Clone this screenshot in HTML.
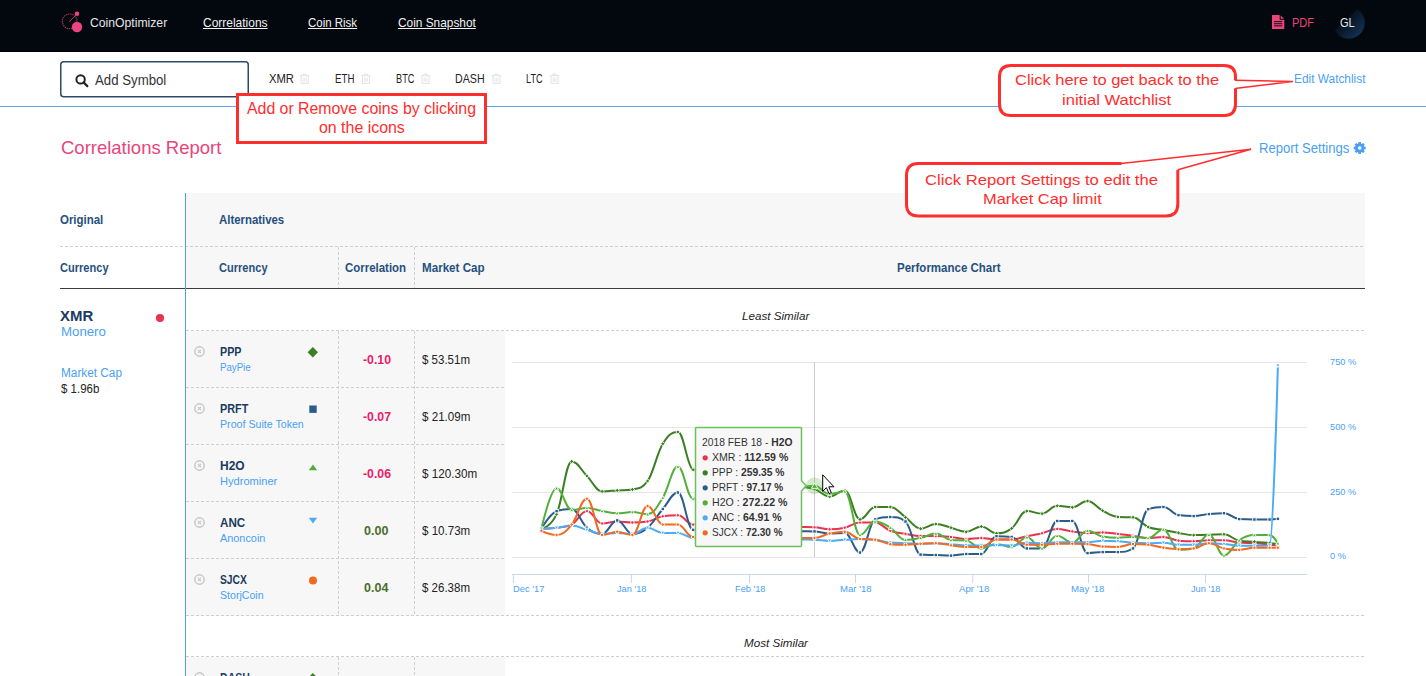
<!DOCTYPE html>
<html><head><meta charset="utf-8"><title>CoinOptimizer - Correlations</title>
<style>
html,body{margin:0;padding:0;}
body{width:1426px;height:676px;overflow:hidden;position:relative;background:#fff;font-family:"Liberation Sans",sans-serif;}
.t{position:absolute;white-space:nowrap;line-height:1;}
.a{position:absolute;}
svg{position:absolute;left:0;top:0;overflow:visible;}
</style></head><body>
<svg width="1426" height="676" viewBox="0 0 1426 676"><rect x="0" y="0" width="1426" height="52" fill="#03080f"/><rect x="0" y="51" width="1426" height="1" fill="#000"/><circle cx="69.7" cy="21.4" r="7.4" fill="none" stroke="#b8335f" stroke-width="1.1" stroke-dasharray="1.4 0.8"/><line x1="69.3" y1="21.6" x2="76" y2="15.2" stroke="#b8335f" stroke-width="1"/><circle cx="77" cy="27" r="5.2" fill="#ec4480"/><circle cx="77" cy="13.8" r="2.3" fill="#ec4480"/><path d="M1272 15H1279.5L1284.3 19.8V29H1272Z" fill="#e8457a"/><path d="M1280 15V19.5H1284.3" fill="#03080f" stroke="#03080f" stroke-width="0.6"/><path d="M1280.6 15.4L1284 18.8H1280.6Z" fill="#e8457a"/><rect x="1274" y="21.2" width="8.3" height="0.9" fill="#03080f"/><rect x="1274" y="23.3" width="8.3" height="0.9" fill="#03080f"/><rect x="1274" y="25.4" width="8.3" height="0.9" fill="#03080f"/><defs><linearGradient id="avg" x1="1346" y1="19.9" x2="1360" y2="34" gradientUnits="userSpaceOnUse"><stop offset="0" stop-color="#07111f"/><stop offset="1" stop-color="#123152"/></linearGradient></defs><path d="M1357.2 9.2A16 16 0 1 1 1334.8 30.6Z" fill="url(#avg)"/><rect x="60.75" y="61.75" width="187.5" height="35" rx="3" fill="#fff" stroke="#2d4a66" stroke-width="1.5"/><circle cx="80.6" cy="79.4" r="4.2" fill="none" stroke="#222" stroke-width="2"/><line x1="83.6" y1="82.4" x2="87.3" y2="86.1" stroke="#222" stroke-width="2.2" stroke-linecap="round"/><rect x="0" y="106" width="1426" height="1" fill="#5aa9e6"/><g fill="none" stroke="#e2e2e2" stroke-width="1"><path d="M300.0 75.7H309.4"/><path d="M303.0 75.5V74H306.2V75.5"/><path d="M301.2 76V83.4H308.2V76"/><path d="M303.2 77.5V82M304.7 77.5V82M306.2 77.5V82" stroke="#e8e8e8"/></g><g fill="none" stroke="#e2e2e2" stroke-width="1"><path d="M361.2 75.7H370.6"/><path d="M364.2 75.5V74H367.4V75.5"/><path d="M362.4 76V83.4H369.4V76"/><path d="M364.4 77.5V82M365.9 77.5V82M367.4 77.5V82" stroke="#e8e8e8"/></g><g fill="none" stroke="#e2e2e2" stroke-width="1"><path d="M420.9 75.7H430.3"/><path d="M423.9 75.5V74H427.1V75.5"/><path d="M422.1 76V83.4H429.1V76"/><path d="M424.1 77.5V82M425.6 77.5V82M427.1 77.5V82" stroke="#e8e8e8"/></g><g fill="none" stroke="#e2e2e2" stroke-width="1"><path d="M491.8 75.7H501.2"/><path d="M494.8 75.5V74H498.0V75.5"/><path d="M493.0 76V83.4H500.0V76"/><path d="M495.0 77.5V82M496.5 77.5V82M498.0 77.5V82" stroke="#e8e8e8"/></g><g fill="none" stroke="#e2e2e2" stroke-width="1"><path d="M549.9 75.7H559.3"/><path d="M552.9 75.5V74H556.1V75.5"/><path d="M551.1 76V83.4H558.1V76"/><path d="M553.1 77.5V82M554.6 77.5V82M556.1 77.5V82" stroke="#e8e8e8"/></g><rect x="186" y="193" width="1179" height="96" fill="#f7f7f7"/><rect x="186" y="331" width="319" height="285" fill="#f7f7f7"/><rect x="186" y="657" width="319" height="30" fill="#f7f7f7"/><line x1="60" y1="246.5" x2="1365" y2="246.5" stroke="#cfcfcf" stroke-width="1" stroke-dasharray="3 2"/><rect x="60" y="288" width="1305" height="1" fill="#3c3c3c"/><line x1="186" y1="330.5" x2="1365" y2="330.5" stroke="#cfcfcf" stroke-width="1" stroke-dasharray="3 2"/><line x1="186" y1="387.5" x2="505" y2="387.5" stroke="#cfcfcf" stroke-width="1" stroke-dasharray="3 2"/><line x1="186" y1="444.5" x2="505" y2="444.5" stroke="#cfcfcf" stroke-width="1" stroke-dasharray="3 2"/><line x1="186" y1="501.5" x2="505" y2="501.5" stroke="#cfcfcf" stroke-width="1" stroke-dasharray="3 2"/><line x1="186" y1="558.5" x2="505" y2="558.5" stroke="#cfcfcf" stroke-width="1" stroke-dasharray="3 2"/><line x1="186" y1="615.5" x2="1365" y2="615.5" stroke="#cfcfcf" stroke-width="1" stroke-dasharray="3 2"/><line x1="186" y1="656.5" x2="1365" y2="656.5" stroke="#cfcfcf" stroke-width="1" stroke-dasharray="3 2"/><line x1="338.5" y1="247" x2="338.5" y2="288" stroke="#cfcfcf" stroke-width="1" stroke-dasharray="3 2"/><line x1="338.5" y1="331" x2="338.5" y2="615" stroke="#cfcfcf" stroke-width="1" stroke-dasharray="3 2"/><line x1="338.5" y1="657" x2="338.5" y2="680" stroke="#cfcfcf" stroke-width="1" stroke-dasharray="3 2"/><line x1="414.5" y1="247" x2="414.5" y2="288" stroke="#cfcfcf" stroke-width="1" stroke-dasharray="3 2"/><line x1="414.5" y1="331" x2="414.5" y2="615" stroke="#cfcfcf" stroke-width="1" stroke-dasharray="3 2"/><line x1="414.5" y1="657" x2="414.5" y2="680" stroke="#cfcfcf" stroke-width="1" stroke-dasharray="3 2"/><rect x="185" y="193" width="1" height="490" fill="#4a9fe8"/><circle cx="199.5" cy="351.5" r="4.7" fill="none" stroke="#c8c6c6" stroke-width="1.4"/><path d="M198 349.9L201 353.1M201 349.9L198 353.1" stroke="#c8c6c6" stroke-width="1.1"/><path d="M312.8 347.1L318 352.3L312.8 357.5L307.6 352.3Z" fill="#3b7f22"/><circle cx="199.5" cy="408.5" r="4.7" fill="none" stroke="#c8c6c6" stroke-width="1.4"/><path d="M198 406.9L201 410.1M201 406.9L198 410.1" stroke="#c8c6c6" stroke-width="1.1"/><rect x="309.3" y="405.5" width="7.4" height="7.4" fill="#2b5d8a"/><circle cx="199.5" cy="465.5" r="4.7" fill="none" stroke="#c8c6c6" stroke-width="1.4"/><path d="M198 463.9L201 467.1M201 463.9L198 467.1" stroke="#c8c6c6" stroke-width="1.1"/><path d="M313 464.4L317.2 470.20000000000005L308.8 470.20000000000005Z" fill="#52b03a"/><circle cx="199.5" cy="522.5" r="4.7" fill="none" stroke="#c8c6c6" stroke-width="1.4"/><path d="M198 520.9L201 524.1M201 520.9L198 524.1" stroke="#c8c6c6" stroke-width="1.1"/><path d="M308.8 517.8L317.2 517.8L313 523.4Z" fill="#4bacf5"/><circle cx="199.5" cy="579.5" r="4.7" fill="none" stroke="#c8c6c6" stroke-width="1.4"/><path d="M198 577.9L201 581.1M201 577.9L198 581.1" stroke="#c8c6c6" stroke-width="1.1"/><circle cx="313" cy="580.5" r="4" fill="#f06a22"/><circle cx="199.5" cy="677.5" r="4.7" fill="none" stroke="#c8c6c6" stroke-width="1.4"/><path d="M198 675.9L201 679.1M201 675.9L198 679.1" stroke="#c8c6c6" stroke-width="1.1"/><path d="M312.8 673.0999999999999L318 678.3L312.8 683.5L307.6 678.3Z" fill="#3b7f22"/><rect x="505" y="331" width="860" height="284" fill="#fff"/><rect x="512" y="362" width="795" height="1" fill="#e6e6e6"/><rect x="512" y="427" width="795" height="1" fill="#e6e6e6"/><rect x="512" y="492" width="795" height="1" fill="#e6e6e6"/><rect x="512" y="557" width="795" height="1" fill="#e6e6e6"/><rect x="512" y="574" width="795" height="1" fill="#ccd6eb"/><rect x="512.9" y="575" width="1" height="8" fill="#ccd6eb"/><rect x="630.9" y="575" width="1" height="8" fill="#ccd6eb"/><rect x="749.0" y="575" width="1" height="8" fill="#ccd6eb"/><rect x="855.0" y="575" width="1" height="8" fill="#ccd6eb"/><rect x="972.2" y="575" width="1" height="8" fill="#ccd6eb"/><rect x="1088.0" y="575" width="1" height="8" fill="#ccd6eb"/><rect x="1205.0" y="575" width="1" height="8" fill="#ccd6eb"/><rect x="814" y="362" width="1" height="195" fill="#cccccc"/><g><path d="M541.4 528.7C541.4 528.7 550.5 528.5 556.6 527.7C562.6 526.9 565.7 527.7 571.7 524.6C577.8 521.5 580.8 511.0 586.9 511.0C593.0 511.0 596.0 523.5 602.1 523.5C608.1 523.5 611.2 521.5 617.2 521.5C623.3 521.5 626.4 522.5 632.4 522.5C638.5 522.5 641.5 522.5 647.6 521.5C653.7 520.5 656.7 517.3 662.8 516.3C668.8 515.3 671.9 515.3 677.9 515.3C684.0 515.3 687.0 524.3 693.1 524.6C699.2 524.9 702.2 524.8 708.3 524.9C714.3 525.1 717.4 525.1 723.4 525.3C729.5 525.4 732.5 525.5 738.6 525.6C744.7 525.7 747.7 525.8 753.8 526.0C759.8 526.1 762.9 526.2 769.0 526.3C775.0 526.4 778.1 526.5 784.1 526.6C790.2 526.8 793.2 526.8 799.3 527.0C805.4 527.1 808.4 527.0 814.5 527.3C820.5 527.6 823.6 529.3 829.6 529.3C835.7 529.3 838.7 529.1 844.8 527.7C850.9 526.3 853.9 522.5 860.0 522.5C866.0 522.5 869.1 522.5 875.1 522.5C881.2 522.5 884.2 528.5 890.3 530.8C896.4 533.1 899.4 532.9 905.5 533.9C911.5 534.9 914.6 536.0 920.6 536.0C926.7 536.0 929.8 536.0 935.8 536.0C941.9 536.0 944.9 536.4 951.0 537.0C957.1 537.6 960.1 539.0 966.2 539.0C972.2 539.0 975.3 538.0 981.3 538.0C987.4 538.0 990.4 539.5 996.5 539.5C1002.6 539.5 1005.6 539.5 1011.7 539.5C1017.7 539.5 1020.8 537.5 1026.8 536.3C1032.9 535.1 1035.9 534.8 1042.0 533.3C1048.1 531.8 1051.1 528.9 1057.2 528.9C1063.2 528.9 1066.3 530.6 1072.3 531.4C1078.4 532.2 1081.5 532.9 1087.5 532.9C1093.6 532.9 1096.6 532.4 1102.7 532.4C1108.8 532.4 1111.8 533.2 1117.9 533.9C1123.9 534.6 1127.0 535.0 1133.0 535.8C1139.1 536.6 1142.1 538.0 1148.2 538.0C1154.3 538.0 1157.3 536.9 1163.4 536.9C1169.4 536.9 1172.5 540.1 1178.5 540.7C1184.6 541.3 1187.6 541.3 1193.7 541.3C1199.8 541.3 1202.8 540.3 1208.9 540.3C1214.9 540.3 1218.0 540.3 1224.0 540.3C1230.1 540.3 1233.2 541.9 1239.2 542.5C1245.3 543.1 1248.3 542.8 1254.4 543.2C1260.5 543.6 1263.5 544.1 1269.6 544.7C1272.9 545.0 1277.9 545.4 1277.9 545.4" fill="none" stroke="#e8334f" stroke-width="2" stroke-linejoin="round" stroke-linecap="round"/><circle cx="541.4" cy="528.7" r="1.7" fill="#e8334f" stroke="#fff" stroke-width="0.9"/><circle cx="556.6" cy="527.7" r="1.7" fill="#e8334f" stroke="#fff" stroke-width="0.9"/><circle cx="571.7" cy="524.6" r="1.7" fill="#e8334f" stroke="#fff" stroke-width="0.9"/><circle cx="586.9" cy="511.0" r="1.7" fill="#e8334f" stroke="#fff" stroke-width="0.9"/><circle cx="602.1" cy="523.5" r="1.7" fill="#e8334f" stroke="#fff" stroke-width="0.9"/><circle cx="617.2" cy="521.5" r="1.7" fill="#e8334f" stroke="#fff" stroke-width="0.9"/><circle cx="632.4" cy="522.5" r="1.7" fill="#e8334f" stroke="#fff" stroke-width="0.9"/><circle cx="647.6" cy="521.5" r="1.7" fill="#e8334f" stroke="#fff" stroke-width="0.9"/><circle cx="662.8" cy="516.3" r="1.7" fill="#e8334f" stroke="#fff" stroke-width="0.9"/><circle cx="677.9" cy="515.3" r="1.7" fill="#e8334f" stroke="#fff" stroke-width="0.9"/><circle cx="693.1" cy="524.6" r="1.7" fill="#e8334f" stroke="#fff" stroke-width="0.9"/><circle cx="814.5" cy="527.3" r="1.7" fill="#e8334f" stroke="#fff" stroke-width="0.9"/><circle cx="829.6" cy="529.3" r="1.7" fill="#e8334f" stroke="#fff" stroke-width="0.9"/><circle cx="844.8" cy="527.7" r="1.7" fill="#e8334f" stroke="#fff" stroke-width="0.9"/><circle cx="860.0" cy="522.5" r="1.7" fill="#e8334f" stroke="#fff" stroke-width="0.9"/><circle cx="875.1" cy="522.5" r="1.7" fill="#e8334f" stroke="#fff" stroke-width="0.9"/><circle cx="890.3" cy="530.8" r="1.7" fill="#e8334f" stroke="#fff" stroke-width="0.9"/><circle cx="905.5" cy="533.9" r="1.7" fill="#e8334f" stroke="#fff" stroke-width="0.9"/><circle cx="920.6" cy="536.0" r="1.7" fill="#e8334f" stroke="#fff" stroke-width="0.9"/><circle cx="935.8" cy="536.0" r="1.7" fill="#e8334f" stroke="#fff" stroke-width="0.9"/><circle cx="951.0" cy="537.0" r="1.7" fill="#e8334f" stroke="#fff" stroke-width="0.9"/><circle cx="966.2" cy="539.0" r="1.7" fill="#e8334f" stroke="#fff" stroke-width="0.9"/><circle cx="981.3" cy="538.0" r="1.7" fill="#e8334f" stroke="#fff" stroke-width="0.9"/><circle cx="996.5" cy="539.5" r="1.7" fill="#e8334f" stroke="#fff" stroke-width="0.9"/><circle cx="1011.7" cy="539.5" r="1.7" fill="#e8334f" stroke="#fff" stroke-width="0.9"/><circle cx="1026.8" cy="536.3" r="1.7" fill="#e8334f" stroke="#fff" stroke-width="0.9"/><circle cx="1042.0" cy="533.3" r="1.7" fill="#e8334f" stroke="#fff" stroke-width="0.9"/><circle cx="1057.2" cy="528.9" r="1.7" fill="#e8334f" stroke="#fff" stroke-width="0.9"/><circle cx="1072.3" cy="531.4" r="1.7" fill="#e8334f" stroke="#fff" stroke-width="0.9"/><circle cx="1087.5" cy="532.9" r="1.7" fill="#e8334f" stroke="#fff" stroke-width="0.9"/><circle cx="1102.7" cy="532.4" r="1.7" fill="#e8334f" stroke="#fff" stroke-width="0.9"/><circle cx="1117.9" cy="533.9" r="1.7" fill="#e8334f" stroke="#fff" stroke-width="0.9"/><circle cx="1133.0" cy="535.8" r="1.7" fill="#e8334f" stroke="#fff" stroke-width="0.9"/><circle cx="1148.2" cy="538.0" r="1.7" fill="#e8334f" stroke="#fff" stroke-width="0.9"/><circle cx="1163.4" cy="536.9" r="1.7" fill="#e8334f" stroke="#fff" stroke-width="0.9"/><circle cx="1178.5" cy="540.7" r="1.7" fill="#e8334f" stroke="#fff" stroke-width="0.9"/><circle cx="1193.7" cy="541.3" r="1.7" fill="#e8334f" stroke="#fff" stroke-width="0.9"/><circle cx="1208.9" cy="540.3" r="1.7" fill="#e8334f" stroke="#fff" stroke-width="0.9"/><circle cx="1224.0" cy="540.3" r="1.7" fill="#e8334f" stroke="#fff" stroke-width="0.9"/><circle cx="1239.2" cy="542.5" r="1.7" fill="#e8334f" stroke="#fff" stroke-width="0.9"/><circle cx="1254.4" cy="543.2" r="1.7" fill="#e8334f" stroke="#fff" stroke-width="0.9"/><circle cx="1269.6" cy="544.7" r="1.7" fill="#e8334f" stroke="#fff" stroke-width="0.9"/><circle cx="1277.9" cy="545.4" r="1.7" fill="#e8334f" stroke="#fff" stroke-width="0.9"/><path d="M541.4 528.7C541.4 528.7 550.5 527.7 556.6 514.2C562.6 500.7 565.7 461.4 571.7 461.4C577.8 461.4 580.8 469.9 586.9 475.9C593.0 481.9 596.0 491.4 602.1 491.4C608.1 491.4 611.2 490.8 617.2 490.4C623.3 490.0 626.4 490.4 632.4 489.4C638.5 488.4 641.5 489.4 647.6 481.0C653.7 472.6 656.7 453.6 662.8 443.8C668.8 434.0 671.9 432.0 677.9 432.0C684.0 432.0 687.0 467.3 693.1 469.7C699.2 472.1 702.2 471.1 708.3 472.1C714.3 473.1 717.4 473.6 723.4 474.5C729.5 475.5 732.5 476.0 738.6 476.9C744.7 477.9 747.7 478.4 753.8 479.4C759.8 480.3 762.9 480.8 769.0 481.8C775.0 482.7 778.1 483.2 784.1 484.2C790.2 485.1 793.2 485.6 799.3 486.6C805.4 487.6 808.4 487.0 814.5 489.0C820.5 491.0 823.6 496.6 829.6 496.6C835.7 496.6 838.7 490.4 844.8 490.4C850.9 490.4 853.9 519.4 860.0 519.4C866.0 519.4 869.1 507.0 875.1 507.0C881.2 507.0 884.2 507.0 890.3 507.0C896.4 507.0 899.4 513.0 905.5 517.3C911.5 521.6 914.6 528.7 920.6 528.7C926.7 528.7 929.8 524.0 935.8 524.0C941.9 524.0 944.9 526.1 951.0 527.7C957.1 529.3 960.1 531.8 966.2 531.8C972.2 531.8 975.3 526.5 981.3 526.5C987.4 526.5 990.4 533.3 996.5 533.3C1002.6 533.3 1005.6 532.8 1011.7 528.4C1017.7 524.0 1020.8 511.1 1026.8 511.1C1032.9 511.1 1035.9 513.6 1042.0 513.6C1048.1 513.6 1051.1 505.8 1057.2 505.8C1063.2 505.8 1066.3 507.3 1072.3 507.3C1078.4 507.3 1081.5 501.0 1087.5 501.0C1093.6 501.0 1096.6 507.5 1102.7 510.7C1108.8 513.9 1111.8 516.7 1117.9 517.0C1123.9 517.3 1127.0 517.0 1133.0 517.3C1139.1 517.6 1142.1 524.5 1148.2 527.0C1154.3 529.5 1157.3 528.7 1163.4 529.9C1169.4 531.1 1172.5 531.9 1178.5 532.9C1184.6 533.9 1187.6 535.1 1193.7 535.1C1199.8 535.1 1202.8 535.0 1208.9 534.8C1214.9 534.6 1218.0 534.3 1224.0 534.3C1230.1 534.3 1233.2 539.7 1239.2 540.7C1245.3 541.7 1248.3 541.2 1254.4 541.7C1260.5 542.2 1263.5 542.6 1269.6 543.2C1272.9 543.5 1277.9 544.0 1277.9 544.0" fill="none" stroke="#3b7f22" stroke-width="2" stroke-linejoin="round" stroke-linecap="round"/><path d="M541.4 526.6L543.5 528.7L541.4 530.8L539.3 528.7Z" fill="#3b7f22" stroke="#fff" stroke-width="0.9"/><path d="M556.6 512.1L558.7 514.2L556.6 516.3L554.4 514.2Z" fill="#3b7f22" stroke="#fff" stroke-width="0.9"/><path d="M571.7 459.3L573.9 461.4L571.7 463.5L569.6 461.4Z" fill="#3b7f22" stroke="#fff" stroke-width="0.9"/><path d="M586.9 473.8L589.0 475.9L586.9 478.0L584.8 475.9Z" fill="#3b7f22" stroke="#fff" stroke-width="0.9"/><path d="M602.1 489.3L604.2 491.4L602.1 493.5L600.0 491.4Z" fill="#3b7f22" stroke="#fff" stroke-width="0.9"/><path d="M617.2 488.3L619.4 490.4L617.2 492.5L615.1 490.4Z" fill="#3b7f22" stroke="#fff" stroke-width="0.9"/><path d="M632.4 487.3L634.5 489.4L632.4 491.5L630.3 489.4Z" fill="#3b7f22" stroke="#fff" stroke-width="0.9"/><path d="M647.6 478.9L649.7 481.0L647.6 483.1L645.5 481.0Z" fill="#3b7f22" stroke="#fff" stroke-width="0.9"/><path d="M662.8 441.7L664.9 443.8L662.8 445.9L660.6 443.8Z" fill="#3b7f22" stroke="#fff" stroke-width="0.9"/><path d="M677.9 429.9L680.1 432.0L677.9 434.1L675.8 432.0Z" fill="#3b7f22" stroke="#fff" stroke-width="0.9"/><path d="M693.1 467.6L695.2 469.7L693.1 471.8L691.0 469.7Z" fill="#3b7f22" stroke="#fff" stroke-width="0.9"/><path d="M814.5 486.9L816.6 489.0L814.5 491.1L812.3 489.0Z" fill="#3b7f22" stroke="#fff" stroke-width="0.9"/><path d="M829.6 494.5L831.8 496.6L829.6 498.7L827.5 496.6Z" fill="#3b7f22" stroke="#fff" stroke-width="0.9"/><path d="M844.8 488.3L846.9 490.4L844.8 492.5L842.7 490.4Z" fill="#3b7f22" stroke="#fff" stroke-width="0.9"/><path d="M860.0 517.3L862.1 519.4L860.0 521.5L857.8 519.4Z" fill="#3b7f22" stroke="#fff" stroke-width="0.9"/><path d="M875.1 504.9L877.3 507.0L875.1 509.1L873.0 507.0Z" fill="#3b7f22" stroke="#fff" stroke-width="0.9"/><path d="M890.3 504.9L892.4 507.0L890.3 509.1L888.2 507.0Z" fill="#3b7f22" stroke="#fff" stroke-width="0.9"/><path d="M905.5 515.2L907.6 517.3L905.5 519.4L903.4 517.3Z" fill="#3b7f22" stroke="#fff" stroke-width="0.9"/><path d="M920.6 526.6L922.8 528.7L920.6 530.8L918.5 528.7Z" fill="#3b7f22" stroke="#fff" stroke-width="0.9"/><path d="M935.8 521.9L937.9 524.0L935.8 526.1L933.7 524.0Z" fill="#3b7f22" stroke="#fff" stroke-width="0.9"/><path d="M951.0 525.6L953.1 527.7L951.0 529.8L948.9 527.7Z" fill="#3b7f22" stroke="#fff" stroke-width="0.9"/><path d="M966.2 529.7L968.3 531.8L966.2 533.9L964.0 531.8Z" fill="#3b7f22" stroke="#fff" stroke-width="0.9"/><path d="M981.3 524.4L983.5 526.5L981.3 528.6L979.2 526.5Z" fill="#3b7f22" stroke="#fff" stroke-width="0.9"/><path d="M996.5 531.2L998.6 533.3L996.5 535.4L994.4 533.3Z" fill="#3b7f22" stroke="#fff" stroke-width="0.9"/><path d="M1011.7 526.3L1013.8 528.4L1011.7 530.5L1009.5 528.4Z" fill="#3b7f22" stroke="#fff" stroke-width="0.9"/><path d="M1026.8 509.0L1029.0 511.1L1026.8 513.2L1024.7 511.1Z" fill="#3b7f22" stroke="#fff" stroke-width="0.9"/><path d="M1042.0 511.5L1044.1 513.6L1042.0 515.7L1039.9 513.6Z" fill="#3b7f22" stroke="#fff" stroke-width="0.9"/><path d="M1057.2 503.7L1059.3 505.8L1057.2 507.9L1055.1 505.8Z" fill="#3b7f22" stroke="#fff" stroke-width="0.9"/><path d="M1072.3 505.2L1074.5 507.3L1072.3 509.4L1070.2 507.3Z" fill="#3b7f22" stroke="#fff" stroke-width="0.9"/><path d="M1087.5 498.9L1089.6 501.0L1087.5 503.1L1085.4 501.0Z" fill="#3b7f22" stroke="#fff" stroke-width="0.9"/><path d="M1102.7 508.6L1104.8 510.7L1102.7 512.8L1100.6 510.7Z" fill="#3b7f22" stroke="#fff" stroke-width="0.9"/><path d="M1117.9 514.9L1120.0 517.0L1117.9 519.1L1115.7 517.0Z" fill="#3b7f22" stroke="#fff" stroke-width="0.9"/><path d="M1133.0 515.2L1135.2 517.3L1133.0 519.4L1130.9 517.3Z" fill="#3b7f22" stroke="#fff" stroke-width="0.9"/><path d="M1148.2 524.9L1150.3 527.0L1148.2 529.1L1146.1 527.0Z" fill="#3b7f22" stroke="#fff" stroke-width="0.9"/><path d="M1163.4 527.8L1165.5 529.9L1163.4 532.0L1161.2 529.9Z" fill="#3b7f22" stroke="#fff" stroke-width="0.9"/><path d="M1178.5 530.8L1180.7 532.9L1178.5 535.0L1176.4 532.9Z" fill="#3b7f22" stroke="#fff" stroke-width="0.9"/><path d="M1193.7 533.0L1195.8 535.1L1193.7 537.2L1191.6 535.1Z" fill="#3b7f22" stroke="#fff" stroke-width="0.9"/><path d="M1208.9 532.7L1211.0 534.8L1208.9 536.9L1206.8 534.8Z" fill="#3b7f22" stroke="#fff" stroke-width="0.9"/><path d="M1224.0 532.2L1226.2 534.3L1224.0 536.4L1221.9 534.3Z" fill="#3b7f22" stroke="#fff" stroke-width="0.9"/><path d="M1239.2 538.6L1241.3 540.7L1239.2 542.8L1237.1 540.7Z" fill="#3b7f22" stroke="#fff" stroke-width="0.9"/><path d="M1254.4 539.6L1256.5 541.7L1254.4 543.8L1252.3 541.7Z" fill="#3b7f22" stroke="#fff" stroke-width="0.9"/><path d="M1269.6 541.1L1271.7 543.2L1269.6 545.3L1267.4 543.2Z" fill="#3b7f22" stroke="#fff" stroke-width="0.9"/><path d="M1277.9 541.9L1280.0 544.0L1277.9 546.1L1275.8 544.0Z" fill="#3b7f22" stroke="#fff" stroke-width="0.9"/><path d="M541.4 528.7C541.4 528.7 550.5 513.2 556.6 511.1C562.6 509.0 565.7 509.0 571.7 509.0C577.8 509.0 580.8 522.7 586.9 527.7C593.0 532.7 596.0 533.9 602.1 533.9C608.1 533.9 611.2 520.4 617.2 520.4C623.3 520.4 626.4 533.9 632.4 533.9C638.5 533.9 641.5 532.7 647.6 527.7C653.7 522.7 656.7 516.0 662.8 509.0C668.8 502.0 671.9 492.5 677.9 492.5C684.0 492.5 687.0 529.6 693.1 529.8C699.2 530.0 702.2 529.9 708.3 530.0C714.3 530.1 717.4 530.1 723.4 530.2C729.5 530.3 732.5 530.3 738.6 530.4C744.7 530.5 747.7 530.5 753.8 530.6C759.8 530.7 762.9 530.7 769.0 530.8C775.0 530.9 778.1 530.9 784.1 531.0C790.2 531.1 793.2 531.1 799.3 531.2C805.4 531.3 808.4 531.2 814.5 531.4C820.5 531.6 823.6 533.5 829.6 533.5C835.7 533.5 838.7 532.9 844.8 532.9C850.9 532.9 853.9 552.5 860.0 552.5C866.0 552.5 869.1 521.8 875.1 519.4C881.2 517.0 884.2 517.0 890.3 517.0C896.4 517.0 899.4 517.0 905.5 521.5C911.5 526.0 914.6 554.2 920.6 554.6C926.7 555.0 929.8 554.8 935.8 555.0C941.9 555.2 944.9 555.6 951.0 555.6C957.1 555.6 960.1 554.0 966.2 554.0C972.2 554.0 975.3 554.0 981.3 554.0C987.4 554.0 990.4 536.3 996.5 536.3C1002.6 536.3 1005.6 536.3 1011.7 536.9C1017.7 537.5 1020.8 548.4 1026.8 548.4C1032.9 548.4 1035.9 548.4 1042.0 548.4C1048.1 548.4 1051.1 521.0 1057.2 521.0C1063.2 521.0 1066.3 521.0 1072.3 521.0C1078.4 521.0 1081.5 553.1 1087.5 553.1C1093.6 553.1 1096.6 552.1 1102.7 552.1C1108.8 552.1 1111.8 552.1 1117.9 552.1C1123.9 552.1 1127.0 552.1 1133.0 548.4C1139.1 544.7 1142.1 511.4 1148.2 509.2C1154.3 507.0 1157.3 507.0 1163.4 507.0C1169.4 507.0 1172.5 514.1 1178.5 515.1C1184.6 516.1 1187.6 516.1 1193.7 516.1C1199.8 516.1 1202.8 514.7 1208.9 514.1C1214.9 513.5 1218.0 513.2 1224.0 513.2C1230.1 513.2 1233.2 518.7 1239.2 519.1C1245.3 519.5 1248.3 519.5 1254.4 519.5C1260.5 519.5 1263.5 519.5 1269.6 519.5C1272.9 519.5 1277.9 518.8 1277.9 518.8" fill="none" stroke="#2b5d8a" stroke-width="2" stroke-linejoin="round" stroke-linecap="round"/><rect x="539.7" y="527.0" width="3.4" height="3.4" fill="#2b5d8a" stroke="#fff" stroke-width="0.9"/><rect x="554.9" y="509.4" width="3.4" height="3.4" fill="#2b5d8a" stroke="#fff" stroke-width="0.9"/><rect x="570.0" y="507.3" width="3.4" height="3.4" fill="#2b5d8a" stroke="#fff" stroke-width="0.9"/><rect x="585.2" y="526.0" width="3.4" height="3.4" fill="#2b5d8a" stroke="#fff" stroke-width="0.9"/><rect x="600.4" y="532.2" width="3.4" height="3.4" fill="#2b5d8a" stroke="#fff" stroke-width="0.9"/><rect x="615.5" y="518.7" width="3.4" height="3.4" fill="#2b5d8a" stroke="#fff" stroke-width="0.9"/><rect x="630.7" y="532.2" width="3.4" height="3.4" fill="#2b5d8a" stroke="#fff" stroke-width="0.9"/><rect x="645.9" y="526.0" width="3.4" height="3.4" fill="#2b5d8a" stroke="#fff" stroke-width="0.9"/><rect x="661.1" y="507.3" width="3.4" height="3.4" fill="#2b5d8a" stroke="#fff" stroke-width="0.9"/><rect x="676.2" y="490.8" width="3.4" height="3.4" fill="#2b5d8a" stroke="#fff" stroke-width="0.9"/><rect x="691.4" y="528.1" width="3.4" height="3.4" fill="#2b5d8a" stroke="#fff" stroke-width="0.9"/><rect x="812.8" y="529.7" width="3.4" height="3.4" fill="#2b5d8a" stroke="#fff" stroke-width="0.9"/><rect x="827.9" y="531.8" width="3.4" height="3.4" fill="#2b5d8a" stroke="#fff" stroke-width="0.9"/><rect x="843.1" y="531.2" width="3.4" height="3.4" fill="#2b5d8a" stroke="#fff" stroke-width="0.9"/><rect x="858.3" y="550.8" width="3.4" height="3.4" fill="#2b5d8a" stroke="#fff" stroke-width="0.9"/><rect x="873.4" y="517.7" width="3.4" height="3.4" fill="#2b5d8a" stroke="#fff" stroke-width="0.9"/><rect x="888.6" y="515.3" width="3.4" height="3.4" fill="#2b5d8a" stroke="#fff" stroke-width="0.9"/><rect x="903.8" y="519.8" width="3.4" height="3.4" fill="#2b5d8a" stroke="#fff" stroke-width="0.9"/><rect x="918.9" y="552.9" width="3.4" height="3.4" fill="#2b5d8a" stroke="#fff" stroke-width="0.9"/><rect x="934.1" y="553.3" width="3.4" height="3.4" fill="#2b5d8a" stroke="#fff" stroke-width="0.9"/><rect x="949.3" y="553.9" width="3.4" height="3.4" fill="#2b5d8a" stroke="#fff" stroke-width="0.9"/><rect x="964.5" y="552.3" width="3.4" height="3.4" fill="#2b5d8a" stroke="#fff" stroke-width="0.9"/><rect x="979.6" y="552.3" width="3.4" height="3.4" fill="#2b5d8a" stroke="#fff" stroke-width="0.9"/><rect x="994.8" y="534.6" width="3.4" height="3.4" fill="#2b5d8a" stroke="#fff" stroke-width="0.9"/><rect x="1010.0" y="535.2" width="3.4" height="3.4" fill="#2b5d8a" stroke="#fff" stroke-width="0.9"/><rect x="1025.1" y="546.7" width="3.4" height="3.4" fill="#2b5d8a" stroke="#fff" stroke-width="0.9"/><rect x="1040.3" y="546.7" width="3.4" height="3.4" fill="#2b5d8a" stroke="#fff" stroke-width="0.9"/><rect x="1055.5" y="519.3" width="3.4" height="3.4" fill="#2b5d8a" stroke="#fff" stroke-width="0.9"/><rect x="1070.6" y="519.3" width="3.4" height="3.4" fill="#2b5d8a" stroke="#fff" stroke-width="0.9"/><rect x="1085.8" y="551.4" width="3.4" height="3.4" fill="#2b5d8a" stroke="#fff" stroke-width="0.9"/><rect x="1101.0" y="550.4" width="3.4" height="3.4" fill="#2b5d8a" stroke="#fff" stroke-width="0.9"/><rect x="1116.2" y="550.4" width="3.4" height="3.4" fill="#2b5d8a" stroke="#fff" stroke-width="0.9"/><rect x="1131.3" y="546.7" width="3.4" height="3.4" fill="#2b5d8a" stroke="#fff" stroke-width="0.9"/><rect x="1146.5" y="507.5" width="3.4" height="3.4" fill="#2b5d8a" stroke="#fff" stroke-width="0.9"/><rect x="1161.7" y="505.3" width="3.4" height="3.4" fill="#2b5d8a" stroke="#fff" stroke-width="0.9"/><rect x="1176.8" y="513.4" width="3.4" height="3.4" fill="#2b5d8a" stroke="#fff" stroke-width="0.9"/><rect x="1192.0" y="514.4" width="3.4" height="3.4" fill="#2b5d8a" stroke="#fff" stroke-width="0.9"/><rect x="1207.2" y="512.4" width="3.4" height="3.4" fill="#2b5d8a" stroke="#fff" stroke-width="0.9"/><rect x="1222.3" y="511.5" width="3.4" height="3.4" fill="#2b5d8a" stroke="#fff" stroke-width="0.9"/><rect x="1237.5" y="517.4" width="3.4" height="3.4" fill="#2b5d8a" stroke="#fff" stroke-width="0.9"/><rect x="1252.7" y="517.8" width="3.4" height="3.4" fill="#2b5d8a" stroke="#fff" stroke-width="0.9"/><rect x="1267.9" y="517.8" width="3.4" height="3.4" fill="#2b5d8a" stroke="#fff" stroke-width="0.9"/><rect x="1276.2" y="517.1" width="3.4" height="3.4" fill="#2b5d8a" stroke="#fff" stroke-width="0.9"/><path d="M541.4 528.7C541.4 528.7 550.5 488.3 556.6 488.3C562.6 488.3 565.7 510.0 571.7 510.0C577.8 510.0 580.8 508.0 586.9 508.0C593.0 508.0 596.0 510.0 602.1 511.0C608.1 512.0 611.2 513.2 617.2 513.2C623.3 513.2 626.4 512.1 632.4 512.1C638.5 512.1 641.5 514.2 647.6 514.2C653.7 514.2 656.7 507.2 662.8 497.7C668.8 488.2 671.9 466.6 677.9 466.6C684.0 466.6 687.0 498.7 693.1 498.7C699.2 498.7 702.2 497.7 708.3 497.1C714.3 496.4 717.4 496.1 723.4 495.5C729.5 494.8 732.5 494.5 738.6 493.9C744.7 493.2 747.7 492.9 753.8 492.2C759.8 491.6 762.9 491.3 769.0 490.6C775.0 490.0 778.1 489.7 784.1 489.0C790.2 488.4 793.2 488.1 799.3 487.4C805.4 486.8 808.4 485.8 814.5 485.8C820.5 485.8 823.6 494.0 829.6 494.0C835.7 494.0 838.7 491.4 844.8 491.4C850.9 491.4 853.9 535.0 860.0 535.0C866.0 535.0 869.1 521.5 875.1 521.5C881.2 521.5 884.2 524.0 890.3 527.7C896.4 531.4 899.4 540.0 905.5 540.0C911.5 540.0 914.6 539.3 920.6 538.0C926.7 536.7 929.8 533.5 935.8 533.5C941.9 533.5 944.9 539.5 951.0 540.0C957.1 540.5 960.1 540.0 966.2 540.5C972.2 541.0 975.3 548.4 981.3 548.4C987.4 548.4 990.4 544.0 996.5 544.0C1002.6 544.0 1005.6 547.0 1011.7 547.0C1017.7 547.0 1020.8 537.3 1026.8 537.3C1032.9 537.3 1035.9 548.4 1042.0 548.4C1048.1 548.4 1051.1 535.8 1057.2 535.8C1063.2 535.8 1066.3 542.5 1072.3 542.5C1078.4 542.5 1081.5 530.7 1087.5 530.7C1093.6 530.7 1096.6 535.4 1102.7 536.6C1108.8 537.8 1111.8 537.8 1117.9 537.8C1123.9 537.8 1127.0 536.9 1133.0 536.9C1139.1 536.9 1142.1 538.0 1148.2 538.0C1154.3 538.0 1157.3 529.5 1163.4 529.5C1169.4 529.5 1172.5 549.9 1178.5 549.9C1184.6 549.9 1187.6 549.9 1193.7 548.4C1199.8 546.9 1202.8 534.8 1208.9 534.8C1214.9 534.8 1218.0 555.5 1224.0 555.5C1230.1 555.5 1233.2 544.4 1239.2 540.3C1245.3 536.2 1248.3 535.1 1254.4 535.1C1260.5 535.1 1263.5 535.1 1269.6 535.1C1272.9 535.1 1277.9 543.2 1277.9 543.2" fill="none" stroke="#52b03a" stroke-width="2" stroke-linejoin="round" stroke-linecap="round"/><path d="M541.4 526.7L543.4 530.4L539.4 530.4Z" fill="#52b03a" stroke="#fff" stroke-width="0.9"/><path d="M556.6 486.3L558.6 490.0L554.5 490.0Z" fill="#52b03a" stroke="#fff" stroke-width="0.9"/><path d="M571.7 508.0L573.8 511.7L569.7 511.7Z" fill="#52b03a" stroke="#fff" stroke-width="0.9"/><path d="M586.9 506.0L588.9 509.7L584.9 509.7Z" fill="#52b03a" stroke="#fff" stroke-width="0.9"/><path d="M602.1 509.0L604.1 512.7L600.0 512.7Z" fill="#52b03a" stroke="#fff" stroke-width="0.9"/><path d="M617.2 511.2L619.3 514.9L615.2 514.9Z" fill="#52b03a" stroke="#fff" stroke-width="0.9"/><path d="M632.4 510.1L634.5 513.8L630.4 513.8Z" fill="#52b03a" stroke="#fff" stroke-width="0.9"/><path d="M647.6 512.2L649.6 515.9L645.5 515.9Z" fill="#52b03a" stroke="#fff" stroke-width="0.9"/><path d="M662.8 495.7L664.8 499.4L660.7 499.4Z" fill="#52b03a" stroke="#fff" stroke-width="0.9"/><path d="M677.9 464.6L680.0 468.3L675.9 468.3Z" fill="#52b03a" stroke="#fff" stroke-width="0.9"/><path d="M693.1 496.7L695.1 500.4L691.1 500.4Z" fill="#52b03a" stroke="#fff" stroke-width="0.9"/><path d="M814.5 483.8L816.5 487.5L812.4 487.5Z" fill="#52b03a" stroke="#fff" stroke-width="0.9"/><path d="M829.6 492.0L831.7 495.7L827.6 495.7Z" fill="#52b03a" stroke="#fff" stroke-width="0.9"/><path d="M844.8 489.4L846.8 493.1L842.8 493.1Z" fill="#52b03a" stroke="#fff" stroke-width="0.9"/><path d="M860.0 533.0L862.0 536.7L857.9 536.7Z" fill="#52b03a" stroke="#fff" stroke-width="0.9"/><path d="M875.1 519.5L877.2 523.2L873.1 523.2Z" fill="#52b03a" stroke="#fff" stroke-width="0.9"/><path d="M890.3 525.7L892.3 529.4L888.3 529.4Z" fill="#52b03a" stroke="#fff" stroke-width="0.9"/><path d="M905.5 538.0L907.5 541.7L903.4 541.7Z" fill="#52b03a" stroke="#fff" stroke-width="0.9"/><path d="M920.6 536.0L922.7 539.7L918.6 539.7Z" fill="#52b03a" stroke="#fff" stroke-width="0.9"/><path d="M935.8 531.5L937.9 535.2L933.8 535.2Z" fill="#52b03a" stroke="#fff" stroke-width="0.9"/><path d="M951.0 538.0L953.0 541.7L949.0 541.7Z" fill="#52b03a" stroke="#fff" stroke-width="0.9"/><path d="M966.2 538.5L968.2 542.2L964.1 542.2Z" fill="#52b03a" stroke="#fff" stroke-width="0.9"/><path d="M981.3 546.4L983.4 550.1L979.3 550.1Z" fill="#52b03a" stroke="#fff" stroke-width="0.9"/><path d="M996.5 542.0L998.5 545.7L994.5 545.7Z" fill="#52b03a" stroke="#fff" stroke-width="0.9"/><path d="M1011.7 545.0L1013.7 548.7L1009.6 548.7Z" fill="#52b03a" stroke="#fff" stroke-width="0.9"/><path d="M1026.8 535.3L1028.9 539.0L1024.8 539.0Z" fill="#52b03a" stroke="#fff" stroke-width="0.9"/><path d="M1042.0 546.4L1044.0 550.1L1040.0 550.1Z" fill="#52b03a" stroke="#fff" stroke-width="0.9"/><path d="M1057.2 533.8L1059.2 537.5L1055.1 537.5Z" fill="#52b03a" stroke="#fff" stroke-width="0.9"/><path d="M1072.3 540.5L1074.4 544.2L1070.3 544.2Z" fill="#52b03a" stroke="#fff" stroke-width="0.9"/><path d="M1087.5 528.7L1089.6 532.4L1085.5 532.4Z" fill="#52b03a" stroke="#fff" stroke-width="0.9"/><path d="M1102.7 534.6L1104.7 538.3L1100.7 538.3Z" fill="#52b03a" stroke="#fff" stroke-width="0.9"/><path d="M1117.9 535.8L1119.9 539.5L1115.8 539.5Z" fill="#52b03a" stroke="#fff" stroke-width="0.9"/><path d="M1133.0 534.9L1135.1 538.6L1131.0 538.6Z" fill="#52b03a" stroke="#fff" stroke-width="0.9"/><path d="M1148.2 536.0L1150.2 539.7L1146.2 539.7Z" fill="#52b03a" stroke="#fff" stroke-width="0.9"/><path d="M1163.4 527.5L1165.4 531.2L1161.3 531.2Z" fill="#52b03a" stroke="#fff" stroke-width="0.9"/><path d="M1178.5 547.9L1180.6 551.6L1176.5 551.6Z" fill="#52b03a" stroke="#fff" stroke-width="0.9"/><path d="M1193.7 546.4L1195.8 550.1L1191.7 550.1Z" fill="#52b03a" stroke="#fff" stroke-width="0.9"/><path d="M1208.9 532.8L1210.9 536.5L1206.8 536.5Z" fill="#52b03a" stroke="#fff" stroke-width="0.9"/><path d="M1224.0 553.5L1226.1 557.2L1222.0 557.2Z" fill="#52b03a" stroke="#fff" stroke-width="0.9"/><path d="M1239.2 538.3L1241.3 542.0L1237.2 542.0Z" fill="#52b03a" stroke="#fff" stroke-width="0.9"/><path d="M1254.4 533.1L1256.4 536.8L1252.3 536.8Z" fill="#52b03a" stroke="#fff" stroke-width="0.9"/><path d="M1269.6 533.1L1271.6 536.8L1267.5 536.8Z" fill="#52b03a" stroke="#fff" stroke-width="0.9"/><path d="M1277.9 541.2L1279.9 544.9L1275.9 544.9Z" fill="#52b03a" stroke="#fff" stroke-width="0.9"/><path d="M541.4 528.7C541.4 528.7 550.5 528.3 556.6 527.7C562.6 527.1 565.7 525.6 571.7 525.6C577.8 525.6 580.8 528.1 586.9 529.8C593.0 531.5 596.0 533.9 602.1 533.9C608.1 533.9 611.2 532.9 617.2 532.9C623.3 532.9 626.4 533.9 632.4 533.9C638.5 533.9 641.5 527.7 647.6 527.7C653.7 527.7 656.7 532.9 662.8 532.9C668.8 532.9 671.9 532.9 677.9 532.9C684.0 532.9 687.0 537.8 693.1 538.0C699.2 538.2 702.2 538.1 708.3 538.2C714.3 538.3 717.4 538.3 723.4 538.4C729.5 538.5 732.5 538.6 738.6 538.6C744.7 538.7 747.7 538.8 753.8 538.9C759.8 538.9 762.9 539.0 769.0 539.1C775.0 539.1 778.1 539.2 784.1 539.3C790.2 539.4 793.2 539.4 799.3 539.5C805.4 539.6 808.4 539.5 814.5 539.7C820.5 539.9 823.6 540.7 829.6 540.7C835.7 540.7 838.7 540.0 844.8 539.7C850.9 539.4 853.9 539.0 860.0 539.0C866.0 539.0 869.1 539.0 875.1 539.7C881.2 540.4 884.2 542.0 890.3 542.6C896.4 543.2 899.4 543.0 905.5 543.2C911.5 543.4 914.6 543.8 920.6 543.8C926.7 543.8 929.8 543.2 935.8 543.2C941.9 543.2 944.9 543.8 951.0 544.2C957.1 544.6 960.1 545.1 966.2 545.3C972.2 545.5 975.3 545.5 981.3 545.5C987.4 545.5 990.4 545.2 996.5 545.2C1002.6 545.2 1005.6 545.5 1011.7 545.5C1017.7 545.5 1020.8 542.8 1026.8 542.8C1032.9 542.8 1035.9 543.2 1042.0 543.2C1048.1 543.2 1051.1 542.2 1057.2 542.2C1063.2 542.2 1066.3 542.2 1072.3 542.2C1078.4 542.2 1081.5 542.2 1087.5 542.2C1093.6 542.2 1096.6 540.7 1102.7 540.7C1108.8 540.7 1111.8 540.9 1117.9 541.3C1123.9 541.7 1127.0 542.4 1133.0 542.8C1139.1 543.2 1142.1 543.2 1148.2 543.2C1154.3 543.2 1157.3 542.8 1163.4 542.8C1169.4 542.8 1172.5 544.7 1178.5 544.7C1184.6 544.7 1187.6 544.7 1193.7 544.7C1199.8 544.7 1202.8 543.2 1208.9 543.2C1214.9 543.2 1218.0 543.5 1224.0 544.0C1230.1 544.5 1233.2 545.7 1239.2 545.7C1245.3 545.7 1248.3 545.7 1254.4 545.7C1260.5 545.7 1263.5 545.7 1269.6 545.5C1272.9 545.3 1277.9 365.6 1277.9 365.6" fill="none" stroke="#4bacf5" stroke-width="2" stroke-linejoin="round" stroke-linecap="round"/><path d="M539.4 527.0L543.4 527.0L541.4 530.7Z" fill="#4bacf5" stroke="#fff" stroke-width="0.9"/><path d="M554.5 526.0L558.6 526.0L556.6 529.7Z" fill="#4bacf5" stroke="#fff" stroke-width="0.9"/><path d="M569.7 523.9L573.8 523.9L571.7 527.6Z" fill="#4bacf5" stroke="#fff" stroke-width="0.9"/><path d="M584.9 528.1L588.9 528.1L586.9 531.8Z" fill="#4bacf5" stroke="#fff" stroke-width="0.9"/><path d="M600.0 532.2L604.1 532.2L602.1 535.9Z" fill="#4bacf5" stroke="#fff" stroke-width="0.9"/><path d="M615.2 531.2L619.3 531.2L617.2 534.9Z" fill="#4bacf5" stroke="#fff" stroke-width="0.9"/><path d="M630.4 532.2L634.5 532.2L632.4 535.9Z" fill="#4bacf5" stroke="#fff" stroke-width="0.9"/><path d="M645.5 526.0L649.6 526.0L647.6 529.7Z" fill="#4bacf5" stroke="#fff" stroke-width="0.9"/><path d="M660.7 531.2L664.8 531.2L662.8 534.9Z" fill="#4bacf5" stroke="#fff" stroke-width="0.9"/><path d="M675.9 531.2L680.0 531.2L677.9 534.9Z" fill="#4bacf5" stroke="#fff" stroke-width="0.9"/><path d="M691.1 536.3L695.1 536.3L693.1 540.0Z" fill="#4bacf5" stroke="#fff" stroke-width="0.9"/><path d="M812.4 538.0L816.5 538.0L814.5 541.7Z" fill="#4bacf5" stroke="#fff" stroke-width="0.9"/><path d="M827.6 539.0L831.7 539.0L829.6 542.7Z" fill="#4bacf5" stroke="#fff" stroke-width="0.9"/><path d="M842.8 538.0L846.8 538.0L844.8 541.7Z" fill="#4bacf5" stroke="#fff" stroke-width="0.9"/><path d="M857.9 537.3L862.0 537.3L860.0 541.0Z" fill="#4bacf5" stroke="#fff" stroke-width="0.9"/><path d="M873.1 538.0L877.2 538.0L875.1 541.7Z" fill="#4bacf5" stroke="#fff" stroke-width="0.9"/><path d="M888.3 540.9L892.3 540.9L890.3 544.6Z" fill="#4bacf5" stroke="#fff" stroke-width="0.9"/><path d="M903.4 541.5L907.5 541.5L905.5 545.2Z" fill="#4bacf5" stroke="#fff" stroke-width="0.9"/><path d="M918.6 542.1L922.7 542.1L920.6 545.8Z" fill="#4bacf5" stroke="#fff" stroke-width="0.9"/><path d="M933.8 541.5L937.9 541.5L935.8 545.2Z" fill="#4bacf5" stroke="#fff" stroke-width="0.9"/><path d="M949.0 542.5L953.0 542.5L951.0 546.2Z" fill="#4bacf5" stroke="#fff" stroke-width="0.9"/><path d="M964.1 543.6L968.2 543.6L966.2 547.3Z" fill="#4bacf5" stroke="#fff" stroke-width="0.9"/><path d="M979.3 543.8L983.4 543.8L981.3 547.5Z" fill="#4bacf5" stroke="#fff" stroke-width="0.9"/><path d="M994.5 543.5L998.5 543.5L996.5 547.2Z" fill="#4bacf5" stroke="#fff" stroke-width="0.9"/><path d="M1009.6 543.8L1013.7 543.8L1011.7 547.5Z" fill="#4bacf5" stroke="#fff" stroke-width="0.9"/><path d="M1024.8 541.1L1028.9 541.1L1026.8 544.8Z" fill="#4bacf5" stroke="#fff" stroke-width="0.9"/><path d="M1040.0 541.5L1044.0 541.5L1042.0 545.2Z" fill="#4bacf5" stroke="#fff" stroke-width="0.9"/><path d="M1055.1 540.5L1059.2 540.5L1057.2 544.2Z" fill="#4bacf5" stroke="#fff" stroke-width="0.9"/><path d="M1070.3 540.5L1074.4 540.5L1072.3 544.2Z" fill="#4bacf5" stroke="#fff" stroke-width="0.9"/><path d="M1085.5 540.5L1089.6 540.5L1087.5 544.2Z" fill="#4bacf5" stroke="#fff" stroke-width="0.9"/><path d="M1100.7 539.0L1104.7 539.0L1102.7 542.7Z" fill="#4bacf5" stroke="#fff" stroke-width="0.9"/><path d="M1115.8 539.6L1119.9 539.6L1117.9 543.3Z" fill="#4bacf5" stroke="#fff" stroke-width="0.9"/><path d="M1131.0 541.1L1135.1 541.1L1133.0 544.8Z" fill="#4bacf5" stroke="#fff" stroke-width="0.9"/><path d="M1146.2 541.5L1150.2 541.5L1148.2 545.2Z" fill="#4bacf5" stroke="#fff" stroke-width="0.9"/><path d="M1161.3 541.1L1165.4 541.1L1163.4 544.8Z" fill="#4bacf5" stroke="#fff" stroke-width="0.9"/><path d="M1176.5 543.0L1180.6 543.0L1178.5 546.7Z" fill="#4bacf5" stroke="#fff" stroke-width="0.9"/><path d="M1191.7 543.0L1195.8 543.0L1193.7 546.7Z" fill="#4bacf5" stroke="#fff" stroke-width="0.9"/><path d="M1206.8 541.5L1210.9 541.5L1208.9 545.2Z" fill="#4bacf5" stroke="#fff" stroke-width="0.9"/><path d="M1222.0 542.3L1226.1 542.3L1224.0 546.0Z" fill="#4bacf5" stroke="#fff" stroke-width="0.9"/><path d="M1237.2 544.0L1241.3 544.0L1239.2 547.7Z" fill="#4bacf5" stroke="#fff" stroke-width="0.9"/><path d="M1252.3 544.0L1256.4 544.0L1254.4 547.7Z" fill="#4bacf5" stroke="#fff" stroke-width="0.9"/><path d="M1267.5 543.8L1271.6 543.8L1269.6 547.5Z" fill="#4bacf5" stroke="#fff" stroke-width="0.9"/><path d="M1275.9 363.9L1279.9 363.9L1277.9 367.6Z" fill="#4bacf5" stroke="#fff" stroke-width="0.9"/><path d="M541.4 530.8C541.4 530.8 550.5 535.0 556.6 535.0C562.6 535.0 565.7 531.9 571.7 524.6C577.8 517.3 580.8 498.7 586.9 498.7C593.0 498.7 596.0 535.0 602.1 535.0C608.1 535.0 611.2 531.8 617.2 531.8C623.3 531.8 626.4 535.0 632.4 535.0C638.5 535.0 641.5 506.0 647.6 506.0C653.7 506.0 656.7 524.6 662.8 524.6C668.8 524.6 671.9 524.6 677.9 524.6C684.0 524.6 687.0 536.9 693.1 537.0C699.2 537.1 702.2 537.1 708.3 537.1C714.3 537.2 717.4 537.2 723.4 537.2C729.5 537.3 732.5 537.3 738.6 537.4C744.7 537.4 747.7 537.5 753.8 537.5C759.8 537.5 762.9 537.6 769.0 537.6C775.0 537.7 778.1 537.7 784.1 537.8C790.2 537.8 793.2 537.8 799.3 537.9C805.4 537.9 808.4 538.0 814.5 538.0C820.5 538.0 823.6 534.7 829.6 533.5C835.7 532.3 838.7 531.8 844.8 531.8C850.9 531.8 853.9 538.3 860.0 539.0C866.0 539.7 869.1 539.0 875.1 539.7C881.2 540.4 884.2 543.7 890.3 544.2C896.4 544.7 899.4 544.7 905.5 544.7C911.5 544.7 914.6 544.1 920.6 543.8C926.7 543.5 929.8 543.2 935.8 543.2C941.9 543.2 944.9 544.5 951.0 545.3C957.1 546.1 960.1 547.0 966.2 547.0C972.2 547.0 975.3 547.0 981.3 547.0C987.4 547.0 990.4 539.5 996.5 539.5C1002.6 539.5 1005.6 539.5 1011.7 539.5C1017.7 539.5 1020.8 544.7 1026.8 544.7C1032.9 544.7 1035.9 544.7 1042.0 544.7C1048.1 544.7 1051.1 543.7 1057.2 543.7C1063.2 543.7 1066.3 543.7 1072.3 543.7C1078.4 543.7 1081.5 543.7 1087.5 544.0C1093.6 544.3 1096.6 546.3 1102.7 546.6C1108.8 546.9 1111.8 546.9 1117.9 546.9C1123.9 546.9 1127.0 544.0 1133.0 544.0C1139.1 544.0 1142.1 544.0 1148.2 544.7C1154.3 545.4 1157.3 546.8 1163.4 547.7C1169.4 548.6 1172.5 549.1 1178.5 549.1C1184.6 549.1 1187.6 549.1 1193.7 548.4C1199.8 547.7 1202.8 543.2 1208.9 543.2C1214.9 543.2 1218.0 547.1 1224.0 548.4C1230.1 549.7 1233.2 549.9 1239.2 549.9C1245.3 549.9 1248.3 547.7 1254.4 547.7C1260.5 547.7 1263.5 547.7 1269.6 547.7C1272.9 547.7 1277.9 547.7 1277.9 547.7" fill="none" stroke="#f06a22" stroke-width="2" stroke-linejoin="round" stroke-linecap="round"/><circle cx="541.4" cy="530.8" r="1.7" fill="#f06a22" stroke="#fff" stroke-width="0.9"/><circle cx="556.6" cy="535.0" r="1.7" fill="#f06a22" stroke="#fff" stroke-width="0.9"/><circle cx="571.7" cy="524.6" r="1.7" fill="#f06a22" stroke="#fff" stroke-width="0.9"/><circle cx="586.9" cy="498.7" r="1.7" fill="#f06a22" stroke="#fff" stroke-width="0.9"/><circle cx="602.1" cy="535.0" r="1.7" fill="#f06a22" stroke="#fff" stroke-width="0.9"/><circle cx="617.2" cy="531.8" r="1.7" fill="#f06a22" stroke="#fff" stroke-width="0.9"/><circle cx="632.4" cy="535.0" r="1.7" fill="#f06a22" stroke="#fff" stroke-width="0.9"/><circle cx="647.6" cy="506.0" r="1.7" fill="#f06a22" stroke="#fff" stroke-width="0.9"/><circle cx="662.8" cy="524.6" r="1.7" fill="#f06a22" stroke="#fff" stroke-width="0.9"/><circle cx="677.9" cy="524.6" r="1.7" fill="#f06a22" stroke="#fff" stroke-width="0.9"/><circle cx="693.1" cy="537.0" r="1.7" fill="#f06a22" stroke="#fff" stroke-width="0.9"/><circle cx="814.5" cy="538.0" r="1.7" fill="#f06a22" stroke="#fff" stroke-width="0.9"/><circle cx="829.6" cy="533.5" r="1.7" fill="#f06a22" stroke="#fff" stroke-width="0.9"/><circle cx="844.8" cy="531.8" r="1.7" fill="#f06a22" stroke="#fff" stroke-width="0.9"/><circle cx="860.0" cy="539.0" r="1.7" fill="#f06a22" stroke="#fff" stroke-width="0.9"/><circle cx="875.1" cy="539.7" r="1.7" fill="#f06a22" stroke="#fff" stroke-width="0.9"/><circle cx="890.3" cy="544.2" r="1.7" fill="#f06a22" stroke="#fff" stroke-width="0.9"/><circle cx="905.5" cy="544.7" r="1.7" fill="#f06a22" stroke="#fff" stroke-width="0.9"/><circle cx="920.6" cy="543.8" r="1.7" fill="#f06a22" stroke="#fff" stroke-width="0.9"/><circle cx="935.8" cy="543.2" r="1.7" fill="#f06a22" stroke="#fff" stroke-width="0.9"/><circle cx="951.0" cy="545.3" r="1.7" fill="#f06a22" stroke="#fff" stroke-width="0.9"/><circle cx="966.2" cy="547.0" r="1.7" fill="#f06a22" stroke="#fff" stroke-width="0.9"/><circle cx="981.3" cy="547.0" r="1.7" fill="#f06a22" stroke="#fff" stroke-width="0.9"/><circle cx="996.5" cy="539.5" r="1.7" fill="#f06a22" stroke="#fff" stroke-width="0.9"/><circle cx="1011.7" cy="539.5" r="1.7" fill="#f06a22" stroke="#fff" stroke-width="0.9"/><circle cx="1026.8" cy="544.7" r="1.7" fill="#f06a22" stroke="#fff" stroke-width="0.9"/><circle cx="1042.0" cy="544.7" r="1.7" fill="#f06a22" stroke="#fff" stroke-width="0.9"/><circle cx="1057.2" cy="543.7" r="1.7" fill="#f06a22" stroke="#fff" stroke-width="0.9"/><circle cx="1072.3" cy="543.7" r="1.7" fill="#f06a22" stroke="#fff" stroke-width="0.9"/><circle cx="1087.5" cy="544.0" r="1.7" fill="#f06a22" stroke="#fff" stroke-width="0.9"/><circle cx="1102.7" cy="546.6" r="1.7" fill="#f06a22" stroke="#fff" stroke-width="0.9"/><circle cx="1117.9" cy="546.9" r="1.7" fill="#f06a22" stroke="#fff" stroke-width="0.9"/><circle cx="1133.0" cy="544.0" r="1.7" fill="#f06a22" stroke="#fff" stroke-width="0.9"/><circle cx="1148.2" cy="544.7" r="1.7" fill="#f06a22" stroke="#fff" stroke-width="0.9"/><circle cx="1163.4" cy="547.7" r="1.7" fill="#f06a22" stroke="#fff" stroke-width="0.9"/><circle cx="1178.5" cy="549.1" r="1.7" fill="#f06a22" stroke="#fff" stroke-width="0.9"/><circle cx="1193.7" cy="548.4" r="1.7" fill="#f06a22" stroke="#fff" stroke-width="0.9"/><circle cx="1208.9" cy="543.2" r="1.7" fill="#f06a22" stroke="#fff" stroke-width="0.9"/><circle cx="1224.0" cy="548.4" r="1.7" fill="#f06a22" stroke="#fff" stroke-width="0.9"/><circle cx="1239.2" cy="549.9" r="1.7" fill="#f06a22" stroke="#fff" stroke-width="0.9"/><circle cx="1254.4" cy="547.7" r="1.7" fill="#f06a22" stroke="#fff" stroke-width="0.9"/><circle cx="1269.6" cy="547.7" r="1.7" fill="#f06a22" stroke="#fff" stroke-width="0.9"/><circle cx="1277.9" cy="547.7" r="1.7" fill="#f06a22" stroke="#fff" stroke-width="0.9"/></g><g></g><circle cx="814.4" cy="485.9" r="8.4" fill="#52b03a" opacity="0.25"/><path d="M814.6 483L817.8 488.4L811.4 488.4Z" fill="#52b03a" stroke="#fff" stroke-width="0.8"/><path d="M696.5 427.5H800.5Q801.5 427.5 801.5 428.5V480.8L806.2 485.8L801.5 491V545.5Q801.5 546.5 800.5 546.5H696.5Q695.5 546.5 695.5 545.5V428.5Q695.5 427.5 696.5 427.5Z" fill="#f7f7f7" stroke="#6cc05c" stroke-width="1.5"/><circle cx="705.2" cy="457.8" r="2.6" fill="#e8334f"/><circle cx="705.2" cy="472.8" r="2.6" fill="#3b7f22"/><circle cx="705.2" cy="487.8" r="2.6" fill="#2b5d8a"/><circle cx="705.2" cy="502.8" r="2.6" fill="#52b03a"/><circle cx="705.2" cy="517.8" r="2.6" fill="#4bacf5"/><circle cx="705.2" cy="532.8" r="2.6" fill="#f06a22"/><rect x="237.5" y="94.5" width="248" height="48" fill="#fff" stroke="#ff2e2e" stroke-width="3"/><path d="M1235.5 80.2V77Q1235.5 65.5 1224 65.5H1011Q999.5 65.5 999.5 77V104Q999.5 115.5 1011 115.5H1224Q1235.5 115.5 1235.5 104V88.4" fill="#fff" stroke="#ff2e2e" stroke-width="3"/><path d="M1234.8 80.2L1293 81.4L1234.8 88.4" fill="#fff" stroke="#ff2e2e" stroke-width="1.5"/><rect x="1232" y="81.2" width="4" height="6.4" fill="#fff"/><path d="M1121.5 163.5H918.5Q906.5 163.5 906.5 175.5V204Q906.5 216 918.5 216H1166Q1177.8 216 1177.8 204V169.5" fill="#fff" stroke="#ff2e2e" stroke-width="3"/><path d="M1121 163.5L1251 149.2L1177.8 169.8" fill="#fff" stroke="#ff2e2e" stroke-width="1.5"/><path d="M1121 165L1176.3 165L1176.3 170.5L1121 170.5Z" fill="#fff"/><path d="M1364.09 146.62L1365.68 146.82L1365.68 149.18L1364.09 149.38L1363.78 150.13L1364.77 151.40L1363.10 153.07L1361.83 152.08L1361.08 152.39L1360.88 153.98L1358.52 153.98L1358.32 152.39L1357.57 152.08L1356.30 153.07L1354.63 151.40L1355.62 150.13L1355.31 149.38L1353.72 149.18L1353.72 146.82L1355.31 146.62L1355.62 145.87L1354.63 144.60L1356.30 142.93L1357.57 143.92L1358.32 143.61L1358.52 142.02L1360.88 142.02L1361.08 143.61L1361.83 143.92L1363.10 142.93L1364.77 144.60L1363.78 145.87ZM1361.50 148.00A1.8 1.8 0 1 0 1357.90 148.00A1.8 1.8 0 1 0 1361.50 148.00Z" fill="#4a9ff5" fill-rule="evenodd"/><circle cx="160" cy="318" r="4.1" fill="#e8334f"/></svg>
<div class="t" style="left:90.2px;top:17px;font-size:12.2px;font-weight:400;font-style:normal;color:#e6e6e6;transform:scaleX(0.9998);transform-origin:0 0;">CoinOptimizer</div>
<div class="t" style="left:202.6px;top:16px;font-size:13.6px;font-weight:400;font-style:normal;color:#f2f2f2;transform:scaleX(0.8813);transform-origin:0 0;text-decoration:underline;">Correlations</div>
<div class="t" style="left:308.2px;top:16px;font-size:13.6px;font-weight:400;font-style:normal;color:#f2f2f2;transform:scaleX(0.8441);transform-origin:0 0;text-decoration:underline;">Coin Risk</div>
<div class="t" style="left:397.9px;top:16px;font-size:13.6px;font-weight:400;font-style:normal;color:#f2f2f2;transform:scaleX(0.8723);transform-origin:0 0;text-decoration:underline;">Coin Snapshot</div>
<div class="t" style="left:1292.4px;top:17px;font-size:12.6px;font-weight:400;font-style:normal;color:#e8457a;transform:scaleX(0.8734);transform-origin:0 0;">PDF</div>
<div class="t" style="left:1340.2px;top:16px;font-size:13.2px;font-weight:400;font-style:normal;color:#e6e6e6;transform:scaleX(0.8355);transform-origin:0 0;">GL</div>
<div class="t" style="left:95.3px;top:73px;font-size:14.0px;font-weight:400;font-style:normal;color:#333333;transform:scaleX(0.9446);transform-origin:0 0;">Add Symbol</div>
<div class="t" style="left:268.8px;top:73px;font-size:12.6px;font-weight:400;font-style:normal;color:#222222;transform:scaleX(0.8929);transform-origin:0 0;">XMR</div>
<div class="t" style="left:334.6px;top:73px;font-size:12.6px;font-weight:400;font-style:normal;color:#222222;transform:scaleX(0.7702);transform-origin:0 0;">ETH</div>
<div class="t" style="left:395.8px;top:73px;font-size:12.6px;font-weight:400;font-style:normal;color:#222222;transform:scaleX(0.7305);transform-origin:0 0;">BTC</div>
<div class="t" style="left:455.4px;top:73px;font-size:12.6px;font-weight:400;font-style:normal;color:#222222;transform:scaleX(0.8457);transform-origin:0 0;">DASH</div>
<div class="t" style="left:526.4px;top:73px;font-size:12.6px;font-weight:400;font-style:normal;color:#222222;transform:scaleX(0.7262);transform-origin:0 0;">LTC</div>
<div class="t" style="left:1293.5px;top:73px;font-size:12.5px;font-weight:400;font-style:normal;color:#4a9ff5;transform:scaleX(0.9500);transform-origin:0 0;">Edit Watchlist</div>
<div class="t" style="left:246.8px;top:101px;font-size:16.8px;font-weight:400;font-style:normal;color:#ff2e2e;transform:scaleX(0.9443);transform-origin:0 0;">Add or Remove coins by clicking</div>
<div class="t" style="left:318.8px;top:120px;font-size:16.8px;font-weight:400;font-style:normal;color:#ff2e2e;transform:scaleX(0.9481);transform-origin:0 0;">on the icons</div>
<div class="t" style="left:1014.7px;top:73px;font-size:14.8px;font-weight:400;font-style:normal;color:#ff2e2e;transform:scaleX(1.1133);transform-origin:0 0;">Click here to get back to the</div>
<div class="t" style="left:1062.4px;top:93px;font-size:14.8px;font-weight:400;font-style:normal;color:#ff2e2e;transform:scaleX(1.1222);transform-origin:0 0;">initial Watchlist</div>
<div class="t" style="left:925.2px;top:173px;font-size:14.8px;font-weight:400;font-style:normal;color:#ff2e2e;transform:scaleX(1.1242);transform-origin:0 0;">Click Report Settings to edit the</div>
<div class="t" style="left:982.9px;top:192px;font-size:14.8px;font-weight:400;font-style:normal;color:#ff2e2e;transform:scaleX(1.1105);transform-origin:0 0;">Market Cap limit</div>
<div class="t" style="left:60.7px;top:139px;font-size:18.2px;font-weight:400;font-style:normal;color:#e8457a;transform:scaleX(1.0165);transform-origin:0 0;">Correlations Report</div>
<div class="t" style="left:1259.3px;top:141px;font-size:14.0px;font-weight:400;font-style:normal;color:#4a9ff5;transform:scaleX(0.9358);transform-origin:0 0;">Report Settings</div>
<div class="t" style="left:60.2px;top:214px;font-size:12.7px;font-weight:700;font-style:normal;color:#26507e;transform:scaleX(0.9033);transform-origin:0 0;">Original</div>
<div class="t" style="left:219.0px;top:214px;font-size:12.7px;font-weight:700;font-style:normal;color:#26507e;transform:scaleX(0.8976);transform-origin:0 0;">Alternatives</div>
<div class="t" style="left:60.3px;top:262px;font-size:12.7px;font-weight:700;font-style:normal;color:#26507e;transform:scaleX(0.8722);transform-origin:0 0;">Currency</div>
<div class="t" style="left:219.0px;top:262px;font-size:12.7px;font-weight:700;font-style:normal;color:#26507e;transform:scaleX(0.8722);transform-origin:0 0;">Currency</div>
<div class="t" style="left:345.4px;top:262px;font-size:12.7px;font-weight:700;font-style:normal;color:#26507e;transform:scaleX(0.9027);transform-origin:0 0;">Correlation</div>
<div class="t" style="left:421.6px;top:262px;font-size:12.7px;font-weight:700;font-style:normal;color:#26507e;transform:scaleX(0.9151);transform-origin:0 0;">Market Cap</div>
<div class="t" style="left:896.5px;top:262px;font-size:12.7px;font-weight:700;font-style:normal;color:#26507e;transform:scaleX(0.9060);transform-origin:0 0;">Performance Chart</div>
<div class="t" style="left:60.1px;top:308px;font-size:15.2px;font-weight:700;font-style:normal;color:#1a3a60;transform:scaleX(0.9837);transform-origin:0 0;">XMR</div>
<div class="t" style="left:60.8px;top:326px;font-size:12.5px;font-weight:400;font-style:normal;color:#4a9ff5;transform:scaleX(1.0592);transform-origin:0 0;">Monero</div>
<div class="t" style="left:60.8px;top:367px;font-size:12.3px;font-weight:400;font-style:normal;color:#4a9ff5;transform:scaleX(0.9597);transform-origin:0 0;">Market Cap</div>
<div class="t" style="left:60.7px;top:383px;font-size:12.5px;font-weight:400;font-style:normal;color:#222222;transform:scaleX(0.9181);transform-origin:0 0;">$ 1.96b</div>
<div class="t" style="left:219.7px;top:346px;font-size:12.3px;font-weight:700;font-style:normal;color:#1a3a60;transform:scaleX(0.8696);transform-origin:0 0;">PPP</div>
<div class="t" style="left:219.7px;top:362px;font-size:10.9px;font-weight:400;font-style:normal;color:#4a9ff5;transform:scaleX(0.8866);transform-origin:0 0;">PayPie</div>
<div class="t" style="left:362.6px;top:354px;font-size:12.6px;font-weight:700;font-style:normal;color:#e8206a;transform:scaleX(0.9750);transform-origin:0 0;">-0.10</div>
<div class="t" style="left:421.6px;top:354px;font-size:12.6px;font-weight:400;font-style:normal;color:#222222;transform:scaleX(0.9140);transform-origin:0 0;">$ 53.51m</div>
<div class="t" style="left:219.7px;top:403px;font-size:12.3px;font-weight:700;font-style:normal;color:#1a3a60;transform:scaleX(0.8814);transform-origin:0 0;">PRFT</div>
<div class="t" style="left:219.7px;top:419px;font-size:10.9px;font-weight:400;font-style:normal;color:#4a9ff5;transform:scaleX(0.9769);transform-origin:0 0;">Proof Suite Token</div>
<div class="t" style="left:362.6px;top:411px;font-size:12.6px;font-weight:700;font-style:normal;color:#e8206a;transform:scaleX(0.9750);transform-origin:0 0;">-0.07</div>
<div class="t" style="left:421.6px;top:411px;font-size:12.6px;font-weight:400;font-style:normal;color:#222222;transform:scaleX(0.9216);transform-origin:0 0;">$ 21.09m</div>
<div class="t" style="left:219.7px;top:460px;font-size:12.3px;font-weight:700;font-style:normal;color:#1a3a60;transform:scaleX(0.9725);transform-origin:0 0;">H2O</div>
<div class="t" style="left:219.7px;top:476px;font-size:10.9px;font-weight:400;font-style:normal;color:#4a9ff5;transform:scaleX(1.0178);transform-origin:0 0;">Hydrominer</div>
<div class="t" style="left:362.6px;top:468px;font-size:12.6px;font-weight:700;font-style:normal;color:#e8206a;transform:scaleX(0.9750);transform-origin:0 0;">-0.06</div>
<div class="t" style="left:421.6px;top:468px;font-size:12.6px;font-weight:400;font-style:normal;color:#222222;transform:scaleX(0.9275);transform-origin:0 0;">$ 120.30m</div>
<div class="t" style="left:219.7px;top:517px;font-size:12.3px;font-weight:700;font-style:normal;color:#1a3a60;transform:scaleX(0.9454);transform-origin:0 0;">ANC</div>
<div class="t" style="left:219.7px;top:533px;font-size:10.9px;font-weight:400;font-style:normal;color:#4a9ff5;transform:scaleX(0.9995);transform-origin:0 0;">Anoncoin</div>
<div class="t" style="left:364.3px;top:525px;font-size:12.6px;font-weight:700;font-style:normal;color:#4a6e2a;transform:scaleX(0.9953);transform-origin:0 0;">0.00</div>
<div class="t" style="left:421.6px;top:525px;font-size:12.6px;font-weight:400;font-style:normal;color:#222222;transform:scaleX(0.9178);transform-origin:0 0;">$ 10.73m</div>
<div class="t" style="left:219.7px;top:574px;font-size:12.3px;font-weight:700;font-style:normal;color:#1a3a60;transform:scaleX(0.8374);transform-origin:0 0;">SJCX</div>
<div class="t" style="left:219.7px;top:590px;font-size:10.9px;font-weight:400;font-style:normal;color:#4a9ff5;transform:scaleX(0.9733);transform-origin:0 0;">StorjCoin</div>
<div class="t" style="left:364.3px;top:582px;font-size:12.6px;font-weight:700;font-style:normal;color:#4a6e2a;transform:scaleX(0.9953);transform-origin:0 0;">0.04</div>
<div class="t" style="left:421.6px;top:582px;font-size:12.6px;font-weight:400;font-style:normal;color:#222222;transform:scaleX(0.9140);transform-origin:0 0;">$ 26.38m</div>
<div class="t" style="left:219.7px;top:672px;font-size:12.3px;font-weight:700;font-style:normal;color:#1a3a60;transform:scaleX(0.8610);transform-origin:0 0;">DASH</div>
<div class="t" style="left:219.7px;top:688px;font-size:10.9px;font-weight:400;font-style:normal;color:#4a9ff5;transform:scaleX(0.8649);transform-origin:0 0;">Dash</div>
<div class="t" style="left:742.2px;top:310px;font-size:11.6px;font-weight:400;font-style:italic;color:#222222;transform:scaleX(1.0042);transform-origin:0 0;">Least Similar</div>
<div class="t" style="left:743.5px;top:637px;font-size:11.6px;font-weight:400;font-style:italic;color:#222222;transform:scaleX(1.0034);transform-origin:0 0;">Most Similar</div>
<div class="t" style="left:513.3px;top:584px;font-size:9.4px;font-weight:400;font-style:normal;color:#4a9ff5;transform:scaleX(0.9968);transform-origin:0 0;">Dec '17</div>
<div class="t" style="left:616.9px;top:584px;font-size:9.4px;font-weight:400;font-style:normal;color:#4a9ff5;transform:scaleX(0.9849);transform-origin:0 0;">Jan '18</div>
<div class="t" style="left:734.6px;top:584px;font-size:9.4px;font-weight:400;font-style:normal;color:#4a9ff5;transform:scaleX(0.9844);transform-origin:0 0;">Feb '18</div>
<div class="t" style="left:840.2px;top:584px;font-size:9.4px;font-weight:400;font-style:normal;color:#4a9ff5;transform:scaleX(1.0204);transform-origin:0 0;">Mar '18</div>
<div class="t" style="left:958.6px;top:584px;font-size:9.4px;font-weight:400;font-style:normal;color:#4a9ff5;transform:scaleX(1.0332);transform-origin:0 0;">Apr '18</div>
<div class="t" style="left:1071.2px;top:584px;font-size:9.4px;font-weight:400;font-style:normal;color:#4a9ff5;transform:scaleX(1.0293);transform-origin:0 0;">May '18</div>
<div class="t" style="left:1190.8px;top:584px;font-size:9.4px;font-weight:400;font-style:normal;color:#4a9ff5;transform:scaleX(0.9849);transform-origin:0 0;">Jun '18</div>
<div class="t" style="left:1330.3px;top:357px;font-size:9.4px;font-weight:400;font-style:normal;color:#4a9ff5;transform:scaleX(0.9890);transform-origin:0 0;">750 %</div>
<div class="t" style="left:1330.3px;top:422px;font-size:9.4px;font-weight:400;font-style:normal;color:#4a9ff5;transform:scaleX(0.9890);transform-origin:0 0;">500 %</div>
<div class="t" style="left:1330.3px;top:487px;font-size:9.4px;font-weight:400;font-style:normal;color:#4a9ff5;transform:scaleX(0.9890);transform-origin:0 0;">250 %</div>
<div class="t" style="left:1330.3px;top:551px;font-size:9.4px;font-weight:400;font-style:normal;color:#4a9ff5;transform:scaleX(0.9903);transform-origin:0 0;">0 %</div>
<div class="t" style="left:702.3px;top:437px;font-size:10.8px;font-weight:400;font-style:normal;color:#333333;transform:scaleX(0.9533);transform-origin:0 0;">2018 FEB 18 - <b>H2O</b></div>
<div class="t" style="left:711.7px;top:452px;font-size:10.8px;font-weight:400;font-style:normal;color:#333333;transform:scaleX(0.9778);transform-origin:0 0;">XMR : <b>112.59 %</b></div>
<div class="t" style="left:711.7px;top:467px;font-size:10.8px;font-weight:400;font-style:normal;color:#333333;transform:scaleX(0.9534);transform-origin:0 0;">PPP : <b>259.35 %</b></div>
<div class="t" style="left:711.7px;top:482px;font-size:10.8px;font-weight:400;font-style:normal;color:#333333;transform:scaleX(0.9292);transform-origin:0 0;">PRFT : <b>97.17 %</b></div>
<div class="t" style="left:711.7px;top:497px;font-size:10.8px;font-weight:400;font-style:normal;color:#333333;transform:scaleX(0.9814);transform-origin:0 0;">H2O : <b>272.22 %</b></div>
<div class="t" style="left:711.7px;top:512px;font-size:10.8px;font-weight:400;font-style:normal;color:#333333;transform:scaleX(0.9745);transform-origin:0 0;">ANC : <b>64.91 %</b></div>
<div class="t" style="left:711.7px;top:527px;font-size:10.8px;font-weight:400;font-style:normal;color:#333333;transform:scaleX(0.9261);transform-origin:0 0;">SJCX : <b>72.30 %</b></div>
<svg width="1426" height="676" viewBox="0 0 1426 676" style="pointer-events:none"><path d="M822.7 474.8V491.3L826.4 487.7L829 493.6L831.3 492.6L828.8 486.8H834Z" fill="#fff" stroke="#000" stroke-width="1" stroke-linejoin="round"/></svg>
</body></html>
